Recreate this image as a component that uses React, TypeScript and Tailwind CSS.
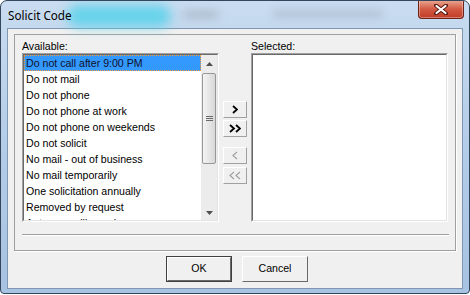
import React from "react";

const items = [
  "Do not call after 9:00 PM",
  "Do not mail",
  "Do not phone",
  "Do not phone at work",
  "Do not phone on weekends",
  "Do not solicit",
  "No mail - out of business",
  "No mail temporarily",
  "One solicitation annually",
  "Removed by request",
  "Autumn mailing only",
];

function Chevrons({ count, dir, disabled }: { count: number; dir: "r" | "l"; disabled?: boolean }) {
  const color = disabled ? "#a0a0a0" : "#000";
  const w = count === 1 ? 6 : 12;
  return (
    <svg width={w} height="9" viewBox={`0 0 ${w} 9`}>
      {Array.from({ length: count }).map((_, i) => {
        const x = i * 6;
        const d = dir === "r" ? `M${x + 1} 1 L${x + 5} 4.5 L${x + 1} 8` : `M${x + 5} 1 L${x + 1} 4.5 L${x + 5} 8`;
        return <path key={i} d={d} fill="none" stroke={color} strokeWidth={disabled ? 1.2 : 1.8} />;
      })}
    </svg>
  );
}

function MoveButton({ children, className = "" }: { children: React.ReactNode; className?: string }) {
  return (
    <div
      className={`h-[17px] w-[24px] flex items-center justify-center bg-[#f0f0f0] border border-t-white border-l-white border-b-[#a0a0a0] border-r-[#a0a0a0] ${className}`}
    >
      {children}
    </div>
  );
}

function ListBox({ children }: { children?: React.ReactNode }) {
  return (
    <div className="w-[197px] h-[169px] border border-t-[#a0a0a0] border-l-[#a0a0a0] border-b-white border-r-white">
      <div className="w-full h-full border border-t-[#696969] border-l-[#696969] border-b-[#e3e3e3] border-r-[#e3e3e3] bg-white flex overflow-hidden">
        {children}
      </div>
    </div>
  );
}

function ScrollBar() {
  return (
    <div className="w-[16px] h-full flex flex-col bg-[#ececec]">
      <div className="h-[17px] flex items-center justify-center">
        <svg width="7" height="4" viewBox="0 0 7 4">
          <path d="M0 4 L3.5 0 L7 4 Z" fill="#505050" />
        </svg>
      </div>
      <div className="h-[91px] mx-[1px] mt-[1px] rounded-[2px] border border-[#979797] bg-gradient-to-r from-[#f4f4f4] to-[#d8d8d8] flex items-center justify-center">
        <svg width="7" height="6" viewBox="0 0 7 6">
          <path d="M0 0.5 H7 M0 2.5 H7 M0 4.5 H7" stroke="#6a6a6a" strokeWidth="1" />
        </svg>
      </div>
      <div className="flex-1" />
      <div className="h-[15px] flex items-center justify-center">
        <svg width="7" height="4" viewBox="0 0 7 4">
          <path d="M0 0 L3.5 4 L7 0 Z" fill="#505050" />
        </svg>
      </div>
    </div>
  );
}

function DialogButton({ label, isDefault }: { label: string; isDefault?: boolean }) {
  return (
    <div className={`w-[66px] h-[26px] ${isDefault ? "border border-[#404040]" : ""}`}>
      <div className="w-full h-full flex items-center justify-center bg-[#f0f0f0] border border-t-white border-l-white border-b-[#696969] border-r-[#696969] text-[10.6px] text-black">
        {label}
      </div>
    </div>
  );
}

export default function App() {
  return (
    <div className="w-[470px] h-[295px] bg-white font-['Liberation_Sans',Arial,sans-serif]">
      <div className="w-[470px] h-[294px] rounded-t-[7px] rounded-b-[4px] border border-[#34465c] bg-gradient-to-b from-[#c9dcf0] via-[#b3cce8] to-[#a7c2e2] flex flex-col overflow-hidden">
        {/* Title bar */}
        <div className="relative h-[27px] flex pl-[7px] pr-[5px]">
          <div className="absolute left-[66px] top-[4px] w-[104px] h-[22px] rounded-full bg-[#55d2ea] blur-[6px] opacity-85" />
          <div className="absolute left-[182px] top-[9px] w-[36px] h-[9px] rounded-full bg-[#9aa6b3] blur-[4px] opacity-50" />
          <div className="absolute left-[272px] top-[9px] w-[110px] h-[8px] rounded-full bg-[#9aa6b3] blur-[4px] opacity-45" />
          <div className="relative flex items-center h-full text-[11.7px] leading-[16px] text-black font-['Noto_Sans',sans-serif] pt-[1px]">
            Solicit Code
          </div>
          <div className="flex-1" />
          <div className="relative w-[46px] h-[19px] -mt-[1px] rounded-b-[4px] border border-t-0 border-[#6e2217] bg-gradient-to-b from-[#e9a996] via-[#d45a43] to-[#c03b24] flex items-center justify-center shadow-[inset_0_0_0_1px_rgba(255,255,255,0.35)]">
            <svg width="14" height="11" viewBox="0 0 14 11">
              <path d="M2 1.5 L12 9.5 M12 1.5 L2 9.5" stroke="#5a1a10" strokeWidth="4" strokeLinecap="round" />
              <path d="M2.5 2 L11.5 9 M11.5 2 L2.5 9" stroke="#ffffff" strokeWidth="2.2" strokeLinecap="round" />
            </svg>
          </div>
        </div>

        {/* Client area */}
        <div className="flex-1 mx-[6px] mb-[4px] border border-[#7f97b2] bg-[#f0f0f0] flex flex-col text-black">
          <div className="ml-[6px] mt-[5px] w-[442px] h-[217px] border border-[#a0a0a0] shadow-[1px_1px_0_#ffffff] flex flex-col">
            <div className="flex px-[7px] pt-[5px]">
              <div className="flex flex-col">
                <div className="h-[13px] leading-[13px] text-[10.6px]">Available:</div>
                <ListBox>
                  <div className="flex-1 flex flex-col">
                    {items.map((t, i) => (
                      <div
                        key={t}
                        className={`h-[16px] shrink-0 leading-[14px] text-[10.6px] pl-[1px] whitespace-nowrap border ${
                          i === 0 ? "bg-[#3399ff] border-dotted border-[#ff9a3c] text-[#10102a]" : "border-transparent"
                        }`}
                      >
                        {t}
                      </div>
                    ))}
                  </div>
                  <ScrollBar />
                </ListBox>
              </div>
              <div className="w-[24px] ml-[4px] mr-[4px] pt-[61px] flex flex-col">
                <MoveButton>
                  <Chevrons count={1} dir="r" />
                </MoveButton>
                <MoveButton className="mt-[2px]">
                  <Chevrons count={2} dir="r" />
                </MoveButton>
                <MoveButton className="mt-[10px]">
                  <Chevrons count={1} dir="l" disabled />
                </MoveButton>
                <MoveButton className="mt-[3px]">
                  <Chevrons count={2} dir="l" disabled />
                </MoveButton>
              </div>
              <div className="flex flex-col">
                <div className="h-[13px] leading-[13px] text-[10.6px]">Selected:</div>
                <ListBox />
              </div>
            </div>
            <div className="ml-[7px] mr-[6px] mt-[12px] h-[2px] border-t border-t-[#a0a0a0] border-b border-b-white" />
          </div>
          <div className="mt-[5px] pl-[4px] flex justify-center gap-[10px]">
            <DialogButton label="OK" isDefault />
            <DialogButton label="Cancel" />
          </div>
        </div>
      </div>
    </div>
  );
}
